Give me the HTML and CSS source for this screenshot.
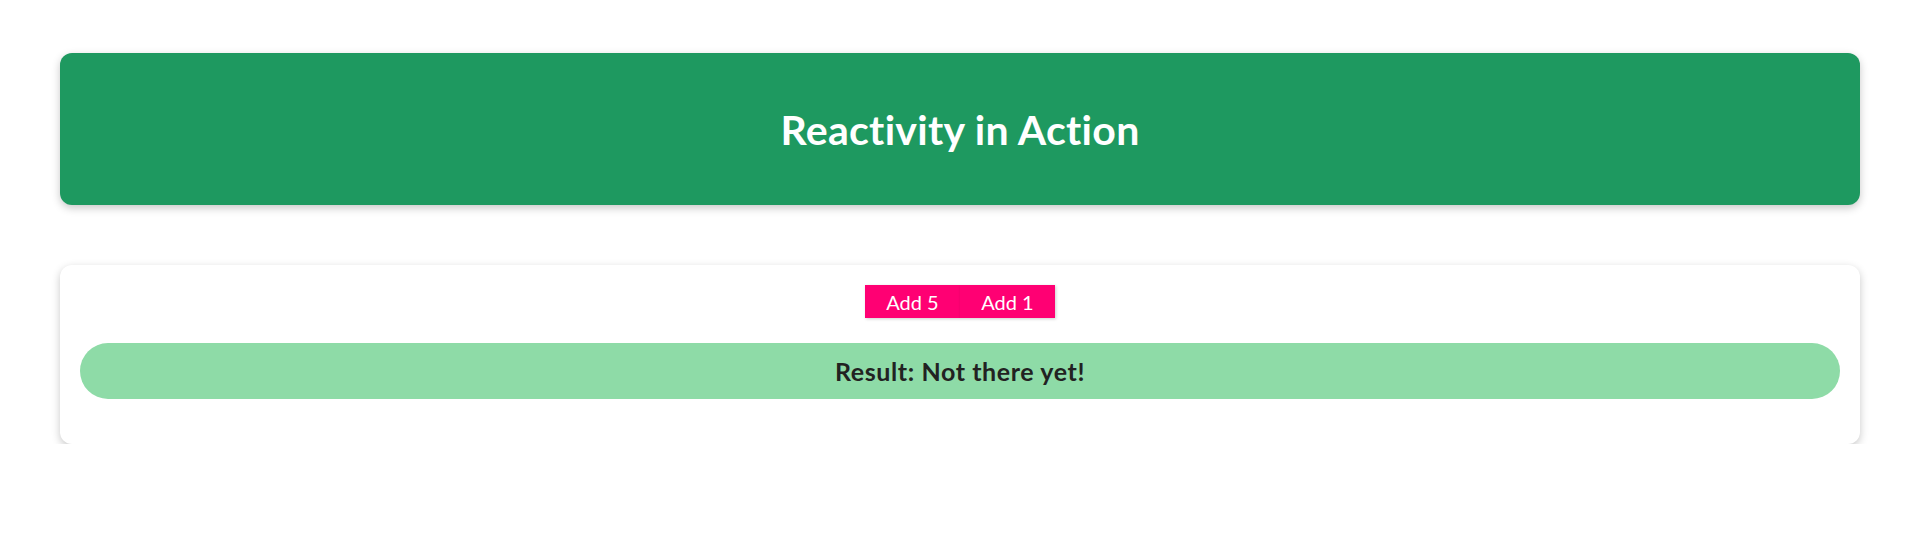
FILE: index.html
```html
<!DOCTYPE html>
<html lang="en">
<head>
<meta charset="utf-8">
<title>Reactivity in Action</title>
<link rel="stylesheet" href="styles.css">
</head>
<body>
<main class="page">
  <header class="hero">
    <h1 class="hero-title">Reactivity in Action</h1>
  </header>
  <section class="card">
    <div class="actions">
      <button class="btn">Add 5</button><button class="btn">Add 1</button>
    </div>
    <p class="result">Result: Not there yet!</p>
  </section>
</main>
</body>
</html>
```
FILE: styles.css
```css
* { box-sizing: border-box; }
html, body { margin: 0; padding: 0; background: #ffffff; }
body { font-family: Lato, "Noto Sans", sans-serif; }
.page { padding: 53px 59px 0 60px; display: flex; flex-direction: column; gap: 60px; }
.hero {
  height: 152px;
  background: #1e9960;
  border-radius: 12px;
  box-shadow: 0 3px 8px rgba(0,0,0,0.22);
  display: flex; align-items: center; justify-content: center;
}
.hero-title { margin: 0; color: #fff; font-size: 41px; font-weight: 700; letter-spacing: 0.3px; }
.card {
  background: #fff;
  border-radius: 12px;
  box-shadow: 0 3px 8px rgba(0,0,0,0.22);
  padding: 20px 20px 45px;
  display: flex; flex-direction: column; align-items: stretch; gap: 25px;
}
.actions { display: flex; justify-content: center; }
.btn {
  width: 95px; height: 33px;
  border: none; margin: 0; padding: 0;
  background: #ff0073; color: #fff;
  font-family: inherit; font-size: 20px;
  box-shadow: 1px 1px 3px rgba(0,0,0,0.2);
}
.result {
  margin: 0; height: 56px; border-radius: 28px;
  background: #8edba7; color: #222;
  display: flex; align-items: center; justify-content: center;
  font-size: 25px; font-weight: 700; letter-spacing: 0.6px;
}
```
